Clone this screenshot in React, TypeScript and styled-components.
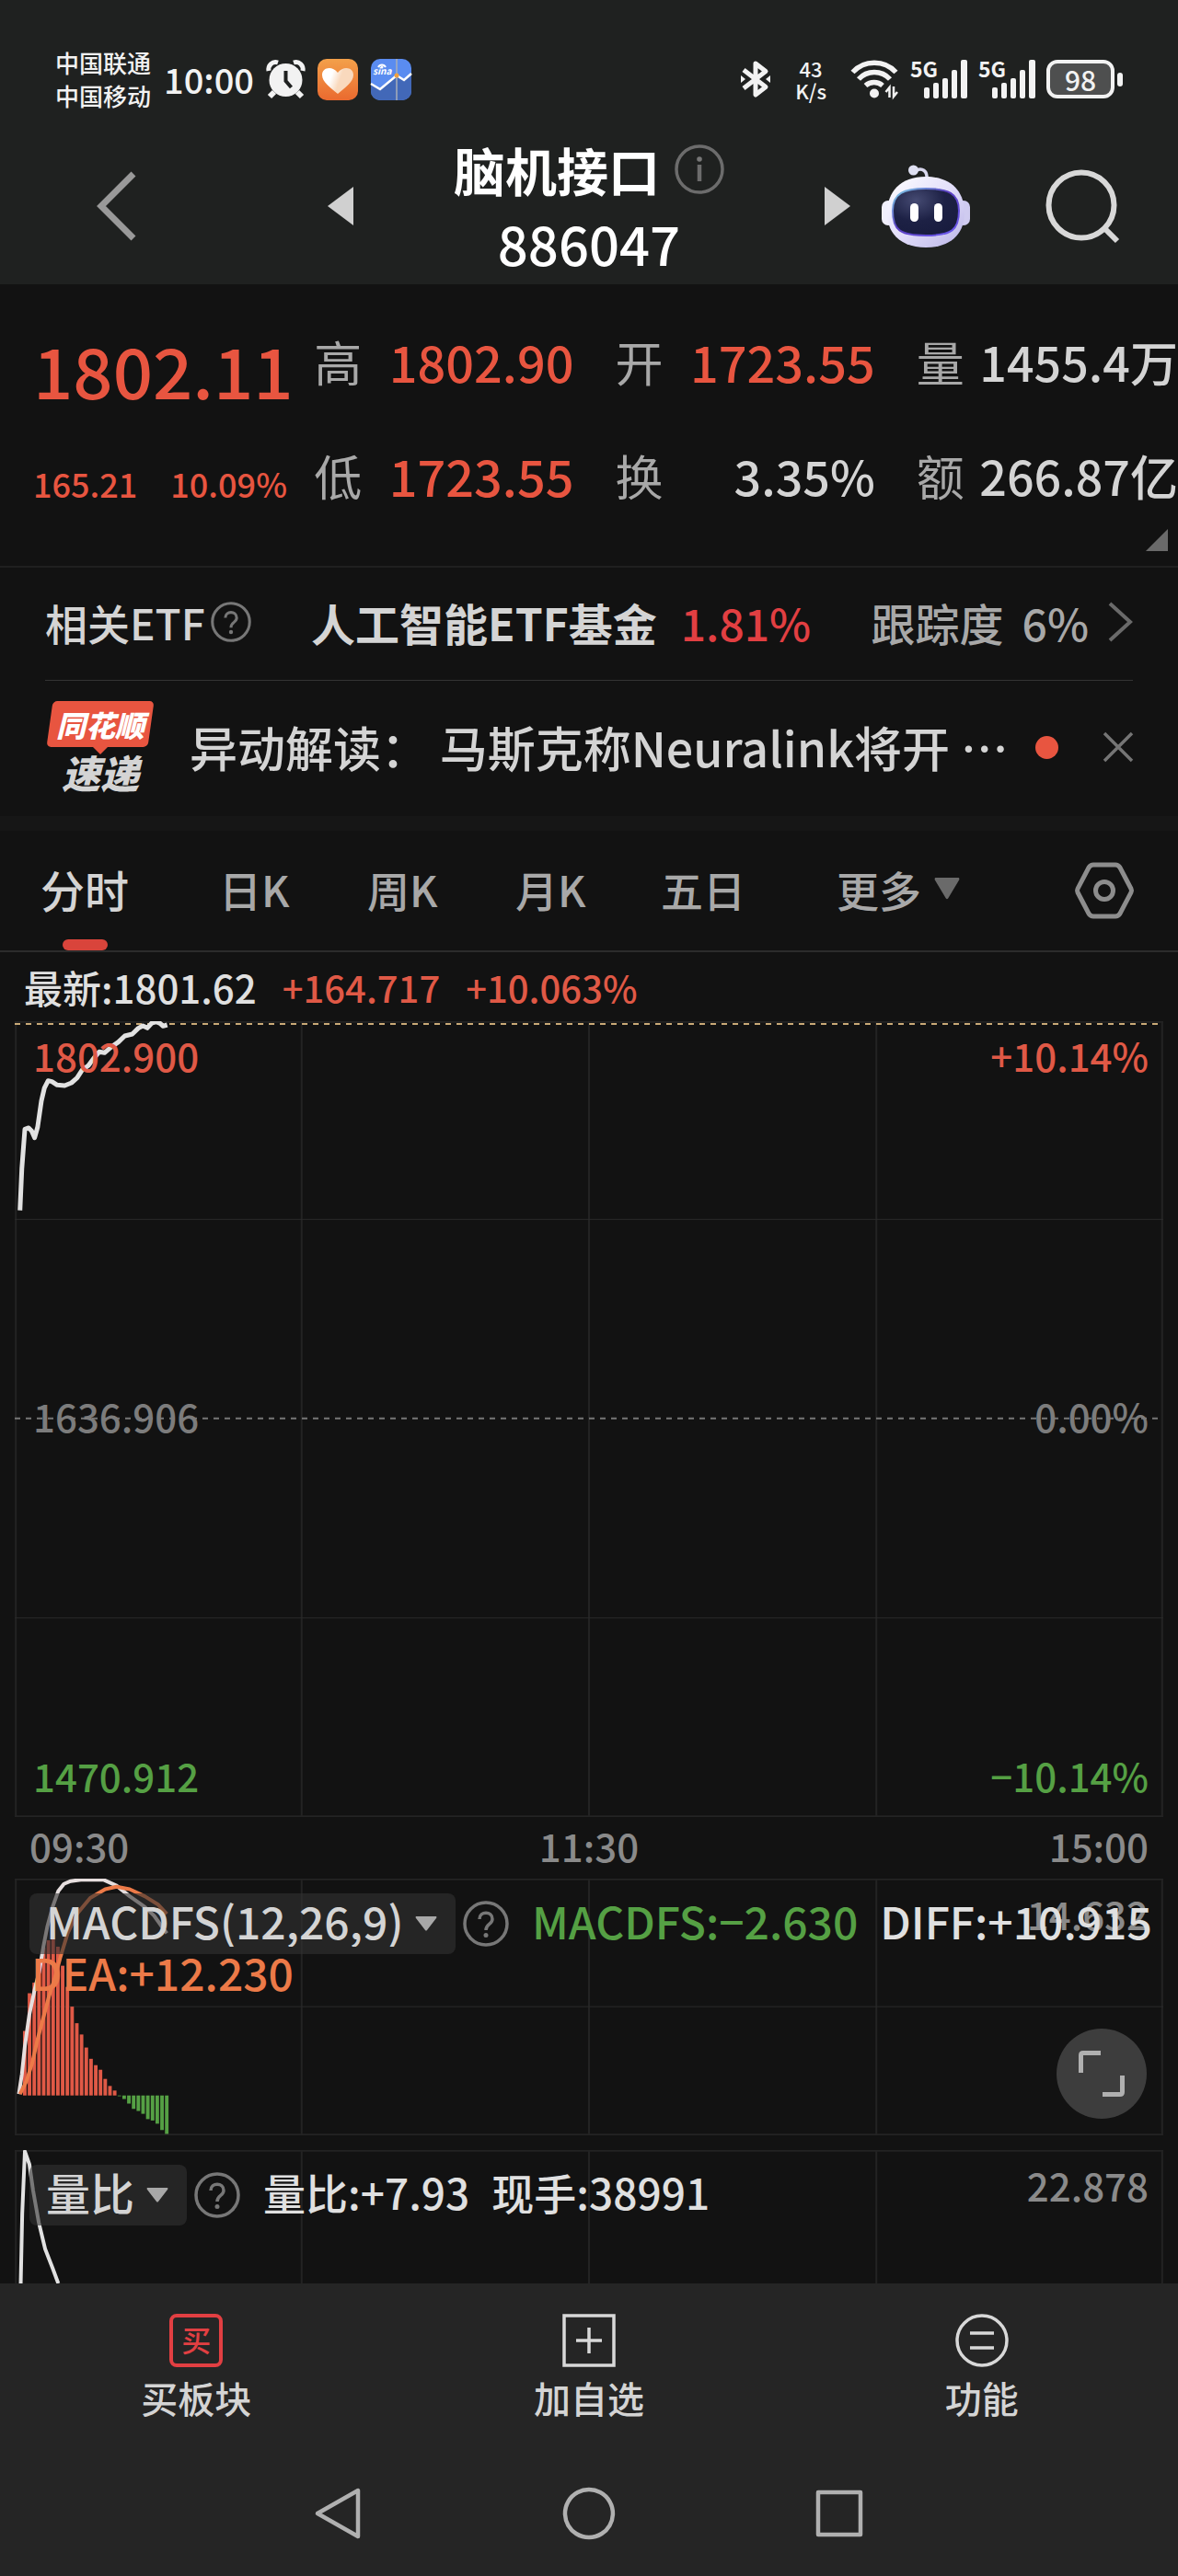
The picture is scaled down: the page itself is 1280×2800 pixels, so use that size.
import React from "react";
import styled, { createGlobalStyle } from "styled-components";

const color = {
  page: "#121212",
  bar: "#1f2120",
  tray: "#252525",
  red: "#e85540",
  chartRed: "#e05946",
  crimson: "#e23f42",
  green: "#55a044",
  orange: "#ec7a48",
  text: "#d4d4d4",
  bright: "#e0e0e0",
  muted: "#a8a8a8",
  dim: "#8a8a8a",
  line: "#2b2b2b",
};

const GlobalStyle = createGlobalStyle`
  *, *::before, *::after { box-sizing: border-box; }
  body {
    margin: 0;
    background: ${color.page};
    color: ${color.text};
    font-family: "Noto Sans CJK SC", "Noto Sans", sans-serif;
    font-weight: 500;
  }
  button, select { font: inherit; color: inherit; background: none; border: 0; padding: 0; margin: 0; }
  a { color: inherit; text-decoration: none; }
  svg { display: block; flex: none; overflow: visible; }
`;

const Page = styled.div`
  width: 100%;
  overflow: hidden;
  white-space: nowrap;
`;

/* ---------- header ---------- */

const Header = styled.header`
  background: ${color.bar};
  padding-top: 50px;
`;

const StatusBar = styled.div`
  display: flex;
  justify-content: space-between;
  align-items: center;
  min-height: 72px;
  padding: 0 60px;
  color: #f2f2f2;
`;

const StatusGroup = styled.div<{ $gap: number }>`
  display: flex;
  align-items: center;
  gap: ${(p) => p.$gap}px;
`;

const Carrier = styled.div`
  font-size: 26px;
  line-height: 36px;
`;

const Clock = styled.time`
  font-size: 38px;
  line-height: 48px;
`;

const Speed = styled.div`
  font-size: 22px;
  line-height: 24px;
  text-align: center;
`;

const BatteryWrap = styled.div`
  display: flex;
  align-items: center;
  gap: 3px;
`;

const BatteryBody = styled.div`
  width: 74px;
  border: 4px solid #f2f2f2;
  border-radius: 12px;
  background: #4e4f4f;
  font-size: 30px;
  line-height: 34px;
  text-align: center;
`;

const BatteryTip = styled.div`
  width: 6px;
  height: 15px;
  border-radius: 3px;
  background: #f2f2f2;
`;

const Nav = styled.nav`
  display: grid;
  grid-template-columns: 1fr 512px 1fr;
  align-items: center;
  padding: 22px 0 5px;
`;

const NavLeft = styled.div`
  display: flex;
  align-items: center;
  justify-content: space-between;
  padding-left: 104px;
`;

const NavRight = styled.div`
  display: flex;
  align-items: center;
  justify-content: space-between;
  padding-right: 62px;
`;

const NavPair = styled.div`
  display: flex;
  align-items: center;
  gap: 34px;
`;

const TitleBlock = styled.div`
  display: flex;
  flex-direction: column;
  align-items: center;
  color: #fff;
`;

const TitleRow = styled.div`
  display: flex;
  align-items: center;
  gap: 16px;
`;

const Title = styled.h1`
  margin: 0;
  font-size: 56px;
  line-height: 80px;
  font-weight: 700;
`;

const Code = styled.div`
  font-size: 58px;
  line-height: 80px;
`;

/* ---------- quote ---------- */

const Quote = styled.section`
  position: relative;
  display: grid;
  grid-template-columns: minmax(0, 296fr) 282fr 282fr 284fr;
  column-gap: 45px;
  padding: 22px 0 36px;
  border-bottom: 2px solid #202020;
`;

const Price = styled.div`
  padding: 8px 0 0 36px;
  color: ${color.red};
`;

const PriceMain = styled.div`
  font-size: 76px;
  line-height: 124px;
`;

const PriceChange = styled.div`
  display: flex;
  gap: 36px;
  padding-top: 8px;
  font-size: 36px;
  line-height: 108px;
`;

const StatList = styled.dl`
  margin: 0;
`;

const Stat = styled.div`
  display: flex;
  justify-content: space-between;
  align-items: center;
  line-height: 124px;
`;

const StatLabel = styled.dt`
  font-size: 52px;
  font-weight: 400;
  color: ${color.muted};
`;

const StatValue = styled.dd<{ $up?: boolean }>`
  margin: 0;
  font-size: ${(p) => (p.$up ? 54 : 52)}px;
  color: ${(p) => (p.$up ? color.red : color.text)};
`;

const Corner = styled.div`
  position: absolute;
  right: 11px;
  bottom: 16px;
  border-left: 24px solid transparent;
  border-bottom: 24px solid #6a6a6a;
`;

/* ---------- ETF and news rows ---------- */

const EtfRow = styled.a`
  display: flex;
  align-items: center;
  justify-content: space-between;
  margin: 0 49px;
  padding: 22px 0 26px;
  border-bottom: 1px solid #333;
  font-size: 48px;
  line-height: 74px;
`;

const EtfLabel = styled.span`
  display: flex;
  align-items: center;
  gap: 6px;
  font-size: 46px;
`;

const EtfGroup = styled.span<{ $gap: number }>`
  display: flex;
  align-items: center;
  gap: ${(p) => p.$gap}px;
`;

const EtfName = styled.span`
  font-weight: 700;
`;

const EtfChange = styled.span`
  color: ${color.crimson};
`;

const EtfTrack = styled.span`
  color: ${color.muted};
`;

const NewsRow = styled.div`
  display: flex;
  align-items: center;
  justify-content: space-between;
  padding: 22px 48px 25px 50px;
  border-bottom: 16px solid #161616;
`;

const NewsLink = styled.a`
  display: flex;
  align-items: center;
  gap: 38px;
  font-size: 52px;
  line-height: 100px;
`;

const Brand = styled.span`
  display: flex;
  flex-direction: column;
  align-items: center;
  width: 118px;
  font-weight: 900;
  font-style: italic;
`;

const BrandTop = styled.span`
  position: relative;
  width: 110px;
  margin-bottom: 4px;
  color: #fff;
  font-size: 32px;
  line-height: 50px;
  text-align: center;
  isolation: isolate;

  &::before {
    content: "";
    position: absolute;
    inset: 0;
    z-index: -1;
    border-radius: 5px;
    background: ${color.red};
    transform: skewX(-8deg);
  }

  &::after {
    content: "";
    position: absolute;
    left: 46px;
    top: 49px;
    border: 9px solid transparent;
    border-top-color: ${color.red};
    border-bottom-width: 0;
  }
`;

const BrandBottom = styled.span`
  font-size: 42px;
  line-height: 46px;
`;

const NewsTools = styled.div`
  display: flex;
  align-items: center;
  gap: 48px;
`;

const Dot = styled.span`
  width: 25px;
  height: 25px;
  border-radius: 50%;
  background: ${color.red};
`;

/* ---------- period tabs ---------- */

const TabBar = styled.div`
  display: flex;
  justify-content: space-between;
  align-items: center;
  padding: 0 48px 0 44px;
  border-bottom: 2px solid #2c2c2c;
`;

const Tabs = styled.div`
  display: grid;
  grid-template-columns: 194fr 161fr 161fr 158fr 191fr 140fr;
  flex: 0 1 1005px;
`;

const Tab = styled.button<{ $active?: boolean }>`
  position: relative;
  display: flex;
  align-items: center;
  gap: 14px;
  font-size: ${(p) => (p.$active ? 48 : 46)}px;
  line-height: 70px;
  padding: 28px 0 32px;
  color: ${(p) => (p.$active ? color.text : color.muted)};
`;

const TabMark = styled.span`
  position: absolute;
  left: 24px;
  bottom: 0;
  width: 49px;
  height: 12px;
  border-radius: 6px;
  background: #d9443b;
`;

/* ---------- charts ---------- */

const Latest = styled.div`
  display: flex;
  gap: 28px;
  padding: 4px 26px 3px;
  font-size: 40px;
  line-height: 68px;
  color: ${color.chartRed};
`;

const LatestPrice = styled.span`
  font-size: 42px;
  color: ${color.bright};
`;

const Charts = styled.main`
  padding: 0 16px;
`;

const Panel = styled.section<{ $height: number }>`
  position: relative;
  min-height: ${(p) => p.$height}px;
`;

const Plot = styled.svg`
  position: absolute;
  inset: 0;
  width: 100%;
  height: 100%;
  overflow: hidden;
`;

const PriceScale = styled.div`
  position: relative;
  display: flex;
  flex-direction: column;
  justify-content: space-between;
  min-height: 865px;
  padding: 11px 16px 19px 20px;
`;

const ScaleRow = styled.div<{ $color: string }>`
  display: flex;
  justify-content: space-between;
  font-size: 42px;
  line-height: 52px;
  color: ${(p) => p.$color};
`;

const TimeScale = styled.div`
  display: grid;
  grid-template-columns: 1fr auto 1fr;
  padding: 5px 16px 10px;
  font-size: 42px;
  line-height: 52px;
  color: ${color.dim};
`;

const TimeEnd = styled.span`
  text-align: right;
`;

const PanelMax = styled.span`
  position: absolute;
  right: 16px;
  top: 12px;
  font-size: 42px;
  line-height: 52px;
  color: ${color.dim};
`;

const Legend = styled.div`
  position: relative;
  display: flex;
  align-items: center;
  padding: 16px 0 0 16px;
`;

const Readings = styled.div<{ $size: number }>`
  display: flex;
  gap: 24px;
  margin-left: 25px;
  padding-bottom: 8px;
  font-size: ${(p) => p.$size}px;
  line-height: 58px;
  color: ${color.bright};
`;

const Reading = styled.span<{ $color: string }>`
  color: ${(p) => p.$color};
`;

const SecondLine = styled.div`
  position: relative;
  padding-left: 18px;
  font-size: 48px;
  line-height: 38px;
  color: ${color.orange};
`;

const Picker = styled.label`
  display: flex;
  align-items: center;
  gap: 12px;
  padding: 0 20px 0 18px;
  margin-right: 8px;
  border-radius: 8px;
  background: rgba(50, 50, 50, 0.6);
`;

const PickerSelect = styled.select`
  appearance: none;
  height: 66px;
  padding-bottom: 8px;
  font-size: 48px;
  line-height: 58px;
  color: ${color.text};
`;

const PanelGap = styled.div`
  height: 16px;
`;

const Expand = styled.button`
  position: absolute;
  right: 18px;
  top: 163px;
  display: grid;
  place-items: center;
  width: 98px;
  height: 98px;
  border-radius: 50%;
  background: #3d3d3d;
`;

/* ---------- bottom ---------- */

const Tray = styled.footer`
  background: ${color.tray};
`;

const Actions = styled.div`
  display: grid;
  grid-template-columns: repeat(3, 1fr);
  padding-top: 33px;
`;

const Action = styled.button`
  display: flex;
  flex-direction: column;
  align-items: center;
  gap: 5px;
  font-size: 40px;
  line-height: 56px;
`;

const BuyIcon = styled.span`
  width: 58px;
  height: 58px;
  border: 4px solid ${color.crimson};
  border-radius: 8px;
  color: ${color.crimson};
  font-size: 32px;
  line-height: 46px;
  text-align: center;
`;

const SystemNav = styled.div`
  display: grid;
  grid-template-columns: repeat(3, 272px);
  justify-content: center;
  padding: 68px 0 38px;
`;

const SystemButton = styled.button`
  display: grid;
  place-items: center;
  height: 60px;
`;

/* ---------- icons ---------- */

const AlarmIcon = () => (
  <svg width="41" height="42" viewBox="0 0 41 42" fill="none">
    <circle cx="20.500" cy="22" r="18" fill="#f2f2f2" />
    <path d="M2 12C1 6 6 1 12 3M39 12C40 6 35 1 29 3" stroke="#f2f2f2" strokeWidth="5" />
    <path d="M8 35l-5 5M33 35l5 5" stroke="#f2f2f2" strokeWidth="6" />
    <path d="M20.500 12v11l6 7" stroke={color.bar} strokeWidth="4" />
  </svg>
);

const HeartApp = () => (
  <svg width="44" height="45" viewBox="0 0 44 45">
    <defs>
      <linearGradient id="heartBg" x1="0" y1="0" x2="0" y2="1">
        <stop offset="0" stopColor="#f3a04a" />
        <stop offset="1" stopColor="#ea6a2f" />
      </linearGradient>
      <linearGradient id="heartFill" x1="0" y1="0" x2="1" y2="0.300">
        <stop offset="0.350" stopColor="#fff" />
        <stop offset="0.650" stopColor="#f9d9bd" />
      </linearGradient>
    </defs>
    <rect width="44" height="45" rx="10" fill="url(#heartBg)" />
    <path d="M22 38C14 31 5 25 5 17.500C5 9 16 7 22 15C28 7 39 9 39 17.500C39 25 30 31 22 38Z" fill="url(#heartFill)" />
  </svg>
);

const SinaApp = () => (
  <svg width="44" height="45" viewBox="0 0 44 45">
    <rect width="44" height="45" rx="10" fill="#5a8cf0" />
    <path d="M0 27L10 33L28 18L36 23L44 16V35A10 10 0 0 1 34 45H10A10 10 0 0 1 0 35Z" fill="#4268b8" />
    <path d="M28 0V45" stroke="#a8aeb8" strokeWidth="1.500" />
    <path d="M0 27L10 33L28 18L36 23L44 16" stroke="#fff" strokeWidth="2.500" fill="none" />
    <circle cx="28" cy="18" r="2.500" fill="#f0a040" />
    <path d="M8 9a4.500 4.500 0 0 1 8 0" stroke="#fff" strokeWidth="2" fill="none" />
    <circle cx="12" cy="9" r="1.500" fill="#fff" />
    <text x="2" y="17" fill="#fff" fontSize="10" fontStyle="italic" fontWeight="700">
      sina
    </text>
  </svg>
);

const BluetoothIcon = () => (
  <svg width="32" height="42" viewBox="0 0 32 42" fill="none" stroke="#f2f2f2">
    <path d="M3 11L27 29.500L16 38V4L27 12.500L3 31" strokeWidth="5" strokeLinejoin="round" />
    <path d="M0 17v8l5-4zM32 17v8l-5-4z" fill="#f2f2f2" stroke="none" />
  </svg>
);

const WifiIcon = () => (
  <svg width="52" height="42" viewBox="0 0 52 42" fill="none" stroke="#f2f2f2" strokeWidth="5.500">
    <path d="M1.500 13.500A32 32 0 0 1 48.500 13.500" />
    <path d="M8 21A23 23 0 0 1 42 21" />
    <path d="M15.500 28A14 14 0 0 1 34 28" />
    <circle cx="25" cy="36.500" r="5" fill="#f2f2f2" stroke="none" />
    <path d="M41.500 41V30l-4 5M46 29v11l4-5" strokeWidth="2.500" />
  </svg>
);

const SignalIcon = () => (
  <svg width="62" height="42" viewBox="0 0 62 42" fill="#f2f2f2">
    <text x="0" y="19" fontSize="23" fontWeight="700">
      5G
    </text>
    <rect x="15" y="30" width="6" height="12" rx="2" />
    <rect x="25" y="25" width="6" height="17" rx="2" />
    <rect x="35" y="20" width="6" height="22" rx="2" />
    <rect x="45" y="11" width="6" height="31" rx="2" />
    <rect x="55" y="0" width="7" height="42" rx="2" />
  </svg>
);

const BackIcon = () => (
  <svg width="46" height="80" viewBox="0 0 46 80" fill="none">
    <path d="M41 5L6 40L41 75" stroke="#999" strokeWidth="7" />
  </svg>
);

const StepIcon = ({ next }: { next?: boolean }) => (
  <svg width="28" height="44" viewBox="0 0 28 44" fill="#d0d0d0">
    <path d={next ? "M0 1L28 22L0 43Z" : "M28 1L0 22L28 43Z"} />
  </svg>
);

const InfoIcon = () => (
  <svg width="54" height="54" viewBox="0 0 54 54" fill="none" stroke="#6c6c6c">
    <circle cx="27" cy="27" r="25" strokeWidth="3.500" />
    <path d="M27 22v18" strokeWidth="4.500" />
    <circle cx="27" cy="16" r="2.800" fill="#777" stroke="none" />
  </svg>
);

const RobotIcon = () => (
  <svg width="96" height="90" viewBox="0 0 96 90">
    <defs>
      <linearGradient id="shell" x1="0" y1="0" x2="1" y2="1">
        <stop offset="0" stopColor="#fff" />
        <stop offset="0.500" stopColor="#e2defa" />
        <stop offset="1" stopColor="#b9b4e6" />
      </linearGradient>
      <linearGradient id="rim" x1="0" y1="0" x2="1" y2="1">
        <stop offset="0" stopColor="#7fd6e8" />
        <stop offset="0.450" stopColor="#5a3ec0" />
        <stop offset="1" stopColor="#6a5af0" />
      </linearGradient>
      <radialGradient id="visor" cx="0.350" cy="0.250" r="0.800">
        <stop offset="0" stopColor="#454a72" />
        <stop offset="0.550" stopColor="#1d2145" />
        <stop offset="1" stopColor="#181c3e" />
      </radialGradient>
    </defs>
    <path d="M36 7C44 2 50 7 49 16" stroke="#d9d8ee" strokeWidth="3.500" fill="none" />
    <circle cx="34.500" cy="6" r="5.500" fill="#dfe0f2" />
    <rect x="0" y="39" width="14" height="27" rx="7" fill="#f0effc" />
    <rect x="82" y="39" width="14" height="27" rx="7" fill="#cfcbf0" />
    <path d="M48 13C76 13 90 30 90 52C90 77 73 90 48 90C23 90 6 77 6 52C6 30 20 13 48 13Z" fill="url(#shell)" />
    <path
      d="M48 26C72 26 84 31 84 50C84 71 76 77 48 77C20 77 12 71 12 50C12 31 24 26 48 26Z"
      fill="url(#visor)"
      stroke="url(#rim)"
      strokeWidth="2"
    />
    <rect x="31" y="42" width="9" height="20" rx="4.500" fill="#fff" />
    <rect x="57" y="42" width="9" height="20" rx="4.500" fill="#fff" />
  </svg>
);

const SearchIcon = () => (
  <svg width="82" height="82" viewBox="0 0 82 82" fill="none" stroke="#d8d8d8" strokeWidth="6">
    <circle cx="39" cy="40" r="35.500" />
    <path d="M64 65L78 79" />
  </svg>
);

const HelpIcon = ({ size }: { size: number }) => (
  <svg width={size} height={size} viewBox="0 0 50 50" fill="none" stroke="#777" strokeWidth="3.500">
    <circle cx="25" cy="25" r="23" />
    <path d="M18 20C18 11 32 11 32 20C32 26 25 25 25 32" />
    <circle cx="25" cy="37.500" r="2.500" fill="#777" stroke="none" />
  </svg>
);

const ChevronIcon = () => (
  <svg width="28" height="46" viewBox="0 0 28 46" fill="none">
    <path d="M3 3L25 23L3 43" stroke="#6a6a6a" strokeWidth="4" />
  </svg>
);

const CloseIcon = () => (
  <svg width="34" height="34" viewBox="0 0 34 34" fill="none">
    <path d="M2 2L32 32M32 2L2 32" stroke="#757575" strokeWidth="3.500" />
  </svg>
);

const DownIcon = ({ width, height, fill }: { width: number; height: number; fill: string }) => (
  <svg width={width} height={height} viewBox="0 0 24 16" preserveAspectRatio="none" fill={fill}>
    <path d="M1 0H23Q24 1 23 2L13 15Q12 16 11 15L1 2Q0 1 1 0Z" />
  </svg>
);

const HexIcon = () => (
  <svg width="64" height="62" viewBox="0 0 64 62" fill="none" stroke="#8d8d8d" strokeWidth="5">
    <path d="M20 3H44Q47 3 49 6L61 29Q62 31 61 33L49 56Q47 59 44 59H20Q17 59 15 56L3 33Q2 31 3 29L15 6Q17 3 20 3Z" />
    <circle cx="32" cy="31" r="9.500" />
  </svg>
);

const ExpandIcon = () => (
  <svg width="52" height="52" viewBox="0 0 52 52" fill="none" stroke="#b0b0b0" strokeWidth="5">
    <path d="M3.500 25V6Q3.500 3.500 6 3.500H25M27 48.500H46Q48.500 48.500 48.500 46V28" />
  </svg>
);

const PlusBoxIcon = () => (
  <svg width="58" height="58" viewBox="0 0 58 58" fill="none" stroke="#d8d8d8" strokeWidth="3.500">
    <path d="M2 2H56V56H2ZM29 15V43M15 29H43" />
  </svg>
);

const MenuCircleIcon = () => (
  <svg width="60" height="58" viewBox="0 0 60 58" fill="none" stroke="#d8d8d8" strokeWidth="3.500">
    <circle cx="30" cy="29" r="27" />
    <path d="M17 21H43M17 37H43" />
  </svg>
);

const SystemIcon = ({ d }: { d: string }) => (
  <svg width="58" height="58" viewBox="0 0 58 58" fill="none" stroke="#b0b0b0" strokeWidth="4.500" strokeLinejoin="round">
    <path d={d} />
  </svg>
);

/* ---------- chart data ---------- */

/* Plot units: x runs 0-3058 over the trading day. */
const priceLine =
  "14,617 19,480 27,352 37,348 45,358 53,380 61,345 71,260 79,218 89,194 99,197 113,208 133,210 151,201 166,185 179,160 196,145 211,120 225,100 239,103 256,85 276,68 293,48 313,42 329,23 341,15 353,22 365,6 377,2 387,7 395,16 406,12";

const diffLine =
  "11,611 19,555 27,475 39,385 53,315 65,265 76,195 87,135 101,80 116,35 131,15 149,7 176,3 236,3 271,20 306,50 346,80 371,105 391,135 405,155";

const deaLine =
  "14,611 31,575 46,525 61,455 76,395 91,335 106,285 121,225 141,155 166,100 201,55 241,30 271,23 306,30 346,50 381,73 405,100";

const histogram = [
  183, 290, 320, 370, 420, 440, 462, 422, 368, 308, 252, 205, 173, 136, 104, 86, 73, 47, 27, 14, -2, -10, -23, -38,
  -44, -52, -67, -71, -80, -98, -109,
];

const ratioLine = "16,378 20,180 27,4 39,40 49,115 64,205 81,280 101,335 116,378";

const stats = [
  [
    { label: "高", value: "1802.90", up: true },
    { label: "低", value: "1723.55", up: true },
  ],
  [
    { label: "开", value: "1723.55", up: true },
    { label: "换", value: "3.35%" },
  ],
  [
    { label: "量", value: "1455.4万" },
    { label: "额", value: "266.87亿" },
  ],
];

const Grid = ({ height, rows, open }: { height: number; rows: number[]; open?: boolean }) => (
  <g stroke={color.line} strokeWidth="2" fill="none">
    {[3, 764, 1529, 2294, 3055].map((x) => (
      <path key={x} d={`M${x} 0V${height}`} vectorEffect="non-scaling-stroke" strokeWidth="2" stroke="#232323" />
    ))}
    {rows.map((y) => (
      <path key={y} d={`M0 ${y}H3058`} vectorEffect="non-scaling-stroke" strokeWidth="1" />
    ))}
    <path d="M0 2H3058" vectorEffect="non-scaling-stroke" stroke="#232323" />
    {!open && <path d={`M0 ${height - 2}H3058`} vectorEffect="non-scaling-stroke" stroke="#232323" />}
  </g>
);

const Line = ({ points, stroke, width }: { points: string; stroke: string; width: number }) => (
  <polyline
    points={points}
    fill="none"
    stroke={stroke}
    strokeWidth={width}
    strokeLinejoin="round"
    vectorEffect="non-scaling-stroke"
  />
);

const IndicatorPicker = ({ name, id }: { name: string; id: string }) => (
  <Picker htmlFor={id}>
    <PickerSelect id={id} aria-label={name}>
      <option>{name}</option>
    </PickerSelect>
    <DownIcon width={24} height={16} fill="#a8a8a8" />
  </Picker>
);

export default function App() {
  return (
    <Page>
      <GlobalStyle />
      <Header>
        <StatusBar>
          <StatusGroup $gap={14}>
            <Carrier>
              <div>中国联通</div>
              <div>中国移动</div>
            </Carrier>
            <Clock>10:00</Clock>
            <AlarmIcon />
            <HeartApp />
            <SinaApp />
          </StatusGroup>
          <StatusGroup $gap={27}>
            <BluetoothIcon />
            <Speed>
              <div>43</div>
              <div>K/s</div>
            </Speed>
            <StatusGroup $gap={12}>
              <WifiIcon />
              <SignalIcon />
              <SignalIcon />
              <BatteryWrap>
                <BatteryBody>98</BatteryBody>
                <BatteryTip />
              </BatteryWrap>
            </StatusGroup>
          </StatusGroup>
        </StatusBar>
        <Nav>
          <NavLeft>
            <button aria-label="返回">
              <BackIcon />
            </button>
            <button aria-label="上一个">
              <StepIcon />
            </button>
          </NavLeft>
          <TitleBlock>
            <TitleRow>
              <Title>脑机接口</Title>
              <InfoIcon />
            </TitleRow>
            <Code>886047</Code>
          </TitleBlock>
          <NavRight>
            <NavPair>
              <button aria-label="下一个">
                <StepIcon next />
              </button>
              <button aria-label="助手">
                <RobotIcon />
              </button>
            </NavPair>
            <button aria-label="搜索">
              <SearchIcon />
            </button>
          </NavRight>
        </Nav>
      </Header>

      <Quote>
        <Price>
          <PriceMain>1802.11</PriceMain>
          <PriceChange>
            <span>165.21</span>
            <span>10.09%</span>
          </PriceChange>
        </Price>
        {stats.map((column) => (
          <StatList key={column[0].label}>
            {column.map((s) => (
              <Stat key={s.label}>
                <StatLabel>{s.label}</StatLabel>
                <StatValue $up={s.up}>{s.value}</StatValue>
              </Stat>
            ))}
          </StatList>
        ))}
        <Corner />
      </Quote>

      <EtfRow href="#etf">
        <EtfLabel>
          相关ETF
          <HelpIcon size={44} />
        </EtfLabel>
        <EtfGroup $gap={26}>
          <EtfName>人工智能ETF基金</EtfName>
          <EtfChange>1.81%</EtfChange>
        </EtfGroup>
        <EtfGroup $gap={20}>
          <EtfTrack>跟踪度</EtfTrack>
          <EtfTrack>6%</EtfTrack>
          <ChevronIcon />
        </EtfGroup>
      </EtfRow>

      <NewsRow>
        <NewsLink href="#news">
          <Brand>
            <BrandTop>同花顺</BrandTop>
            <BrandBottom>速递</BrandBottom>
          </Brand>
          异动解读： 马斯克称Neuralink将开 …
        </NewsLink>
        <NewsTools>
          <Dot />
          <button aria-label="关闭">
            <CloseIcon />
          </button>
        </NewsTools>
      </NewsRow>

      <TabBar>
        <Tabs>
          <Tab $active>
            分时
            <TabMark />
          </Tab>
          <Tab>日K</Tab>
          <Tab>周K</Tab>
          <Tab>月K</Tab>
          <Tab>五日</Tab>
          <Tab>
            更多
            <DownIcon width={28} height={24} fill="#6a6a6a" />
          </Tab>
        </Tabs>
        <button aria-label="设置">
          <HexIcon />
        </button>
      </TabBar>

      <Latest>
        <LatestPrice>最新:1801.62</LatestPrice>
        <span>+164.717</span>
        <span>+10.063%</span>
      </Latest>

      <Charts>
        <Panel $height={865}>
          <Plot viewBox="0 0 3058 2595" preserveAspectRatio="none">
            <Grid height={2595} rows={[646, 1946]} />
            <path d="M0 9H3058" stroke="#c9a976" strokeWidth="2" strokeDasharray="6 6" vectorEffect="non-scaling-stroke" />
            <path d="M0 1295H3058" stroke="#777" strokeWidth="2" strokeDasharray="6 6" vectorEffect="non-scaling-stroke" />
            <Line points={priceLine} stroke="#e2e2e2" width={5} />
          </Plot>
          <PriceScale>
            <ScaleRow $color={color.chartRed}>
              <span>1802.900</span>
              <span>+10.14%</span>
            </ScaleRow>
            <ScaleRow $color="#7c7c7c">
              <span>1636.906</span>
              <span>0.00%</span>
            </ScaleRow>
            <ScaleRow $color={color.green}>
              <span>1470.912</span>
              <span>−10.14%</span>
            </ScaleRow>
          </PriceScale>
        </Panel>

        <TimeScale>
          <span>09:30</span>
          <span>11:30</span>
          <TimeEnd>15:00</TimeEnd>
        </TimeScale>

        <Panel $height={279}>
          <Plot viewBox="0 0 3058 728" preserveAspectRatio="none">
            <Grid height={728} rows={[363]} />
            {histogram.map((v, i) => (
              <rect
                key={i}
                x={22 + i * 12.6}
                y={v > 0 ? 615 - v : 615}
                width="9.500"
                height={Math.abs(v)}
                fill={v > 0 ? color.chartRed : color.green}
              />
            ))}
            <Line points={diffLine} stroke="#e6dede" width={4} />
            <Line points={deaLine} stroke={color.orange} width={4} />
          </Plot>
          <PanelMax>14.632</PanelMax>
          <Legend>
            <IndicatorPicker name="MACDFS(12,26,9)" id="indicator-macd" />
            <HelpIcon size={50} />
            <Readings $size={48}>
              <Reading $color={color.green}>MACDFS:−2.630</Reading>
              <span>DIFF:+10.915</span>
            </Readings>
          </Legend>
          <SecondLine>DEA:+12.230</SecondLine>
          <Expand aria-label="全屏">
            <ExpandIcon />
          </Expand>
        </Panel>
        <PanelGap />

        <Panel $height={145}>
          <Plot viewBox="0 0 3058 378" preserveAspectRatio="none">
            <Grid height={378} rows={[]} open />
            <Line points={ratioLine} stroke="#e2e2e2" width={4} />
          </Plot>
          <PanelMax>22.878</PanelMax>
          <Legend>
            <IndicatorPicker name="量比" id="indicator-ratio" />
            <HelpIcon size={50} />
            <Readings $size={46}>
              <span>量比:+7.93</span>
              <span>现手:38991</span>
            </Readings>
          </Legend>
        </Panel>
      </Charts>

      <Tray>
        <Actions>
          <Action>
            <BuyIcon>买</BuyIcon>
            买板块
          </Action>
          <Action>
            <PlusBoxIcon />
            加自选
          </Action>
          <Action>
            <MenuCircleIcon />
            功能
          </Action>
        </Actions>
        <SystemNav>
          <SystemButton aria-label="后退">
            <SystemIcon d="M50 4V54L6 29Z" />
          </SystemButton>
          <SystemButton aria-label="主页">
            <SystemIcon d="M29 3A26 26 0 1 1 28.900 3Z" />
          </SystemButton>
          <SystemButton aria-label="最近任务">
            <SystemIcon d="M6 6H52V52H6Z" />
          </SystemButton>
        </SystemNav>
      </Tray>
    </Page>
  );
}
